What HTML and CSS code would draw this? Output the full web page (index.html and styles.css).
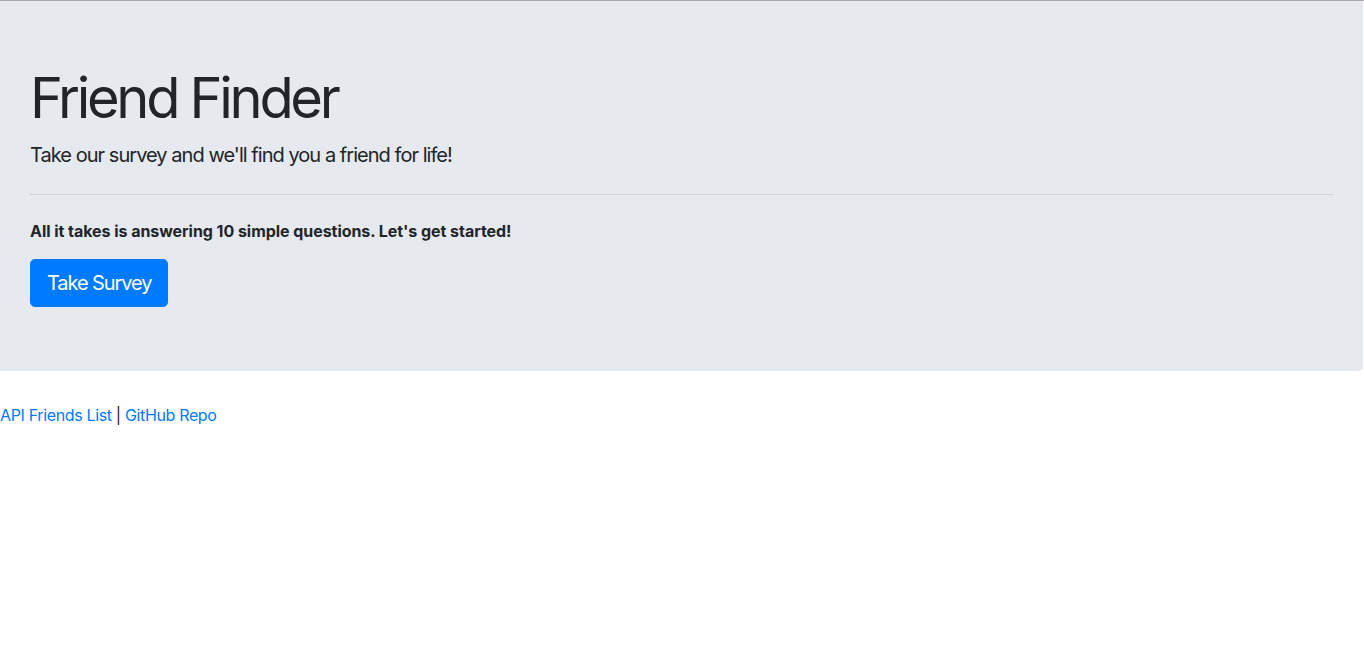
FILE: index.html
```html
<!DOCTYPE html>
<html lang="en">
<head>
<meta charset="utf-8">
<title>Friend Finder</title>
<link rel="stylesheet" href="styles.css">
</head>
<body>
<div class="topline"></div>
<div class="jumbotron">
  <h1 class="display">Friend Finder</h1>
  <p class="lead">Take our survey and we'll find you a friend for life!</p>
  <hr class="divider">
  <p class="intro">All it takes is answering 10 simple questions. Let's get started!</p>
  <a class="btn" href="#">Take Survey</a>
</div>
<footer class="links">
  <a href="#">API Friends List</a> | <a href="#">GitHub Repo</a>
</footer>
</body>
</html>
```
FILE: styles.css
```css
* { box-sizing: border-box; }
html, body { margin: 0; padding: 0; }
body {
  font-family: Inter, "Noto Sans", "Liberation Sans", sans-serif;
  font-size: 16px;
  line-height: 1.5;
  color: #212529;
  background: #fff;
}
.topline { height: 1px; background: #a9a9a9; }
.jumbotron {
  background: #e6e9ee;
  padding: 64px 30px;
  border-radius: 0 0 5px 0;
  margin-right: 1px;
  margin-bottom: 32px;
}
.display {
  margin: 0 0 8px;
  font-size: 56px;
  font-weight: 400;
  line-height: 1.2;
  letter-spacing: -0.059em;
}
.lead {
  margin: 0 0 16px;
  font-size: 20px;
  font-weight: 400;
  letter-spacing: -0.048em;
}
.divider {
  margin: 24px 0;
  border: 0;
  border-top: 1px solid rgba(0,0,0,0.1);
}
.intro {
  margin: 0 0 16px;
  font-weight: 700;
  font-size: 16px;
  letter-spacing: -0.003em;
}
.btn {
  display: inline-block;
  background: #007bff;
  color: #fff;
  border: 1px solid #007bff;
  border-radius: 4.8px;
  padding: 8px 16px;
  font-size: 20px;
  line-height: 1.5;
  letter-spacing: -0.054em;
  text-decoration: none;
}
.links { letter-spacing: -0.022em; }
.links a { color: #007bff; text-decoration: none; }
```
